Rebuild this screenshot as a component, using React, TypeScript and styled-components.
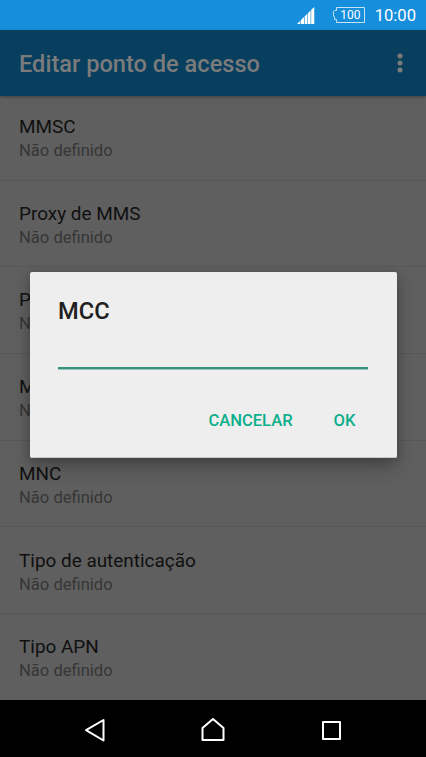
import React from "react";
import styled, { createGlobalStyle } from "styled-components";

const GlobalStyle = createGlobalStyle`
  *, *::before, *::after { box-sizing: border-box; }
  body { margin: 0; background: #000; font-family: Roboto, sans-serif; }
`;

const Screen = styled.div`
  position: relative;
  display: flex;
  flex-direction: column;
  width: 426px;
  height: 757px;
  overflow: hidden;
`;

const StatusBar = styled.header`
  display: flex;
  align-items: center;
  justify-content: flex-end;
  height: 29.5px;
  flex: none;
  padding-right: 10px;
  background: #168edc;
  color: #fff;
`;

const SignalIcon = styled.svg`
  width: 18px;
  height: 18px;
  margin-right: 17px;
  margin-top: 2px;
`;

const BatteryIcon = styled.svg`
  display: block;
  width: 34px;
  height: 18px;
`;

const Battery = styled.div`
  display: grid;
  margin-right: 9px;
  > * { grid-area: 1 / 1; }
`;

const BatteryLevel = styled.span`
  padding-left: 3.5px;
  align-self: center;
  justify-self: center;
  font-size: 12px;
  line-height: 18px;
`;

const Clock = styled.time`
  font-size: 16.6px;
  line-height: 20px;
  margin-top: 2px;
`;

const AppBar = styled.div`
  position: relative;
  z-index: 1;
  display: flex;
  align-items: center;
  justify-content: space-between;
  flex: none;
  height: 66.5px;
  padding: 0 20px 0 19px;
  background: #083f5e;
  box-shadow: 0 1px 3px rgba(0, 0, 0, 0.35);
`;

const Title = styled.h1`
  margin: 2px 0 0;
  color: #7b7b7b;
  font-size: 23.6px;
  line-height: 28px;
  font-weight: 500;
`;

const MoreIcon = styled.svg`
  width: 12px;
  height: 22px;
`;

const List = styled.ul`
  flex: none;
  height: 604px;
  margin: 0;
  padding: 0;
  overflow: hidden;
  list-style: none;
  background: #5f5f5f;
`;

const Row = styled.li<{ $first?: boolean }>`
  height: ${(p) => (p.$first ? 84.5 : 86.7)}px;
  padding: ${(p) => (p.$first ? 18.7 : 21.3)}px 19px 0;
  border-bottom: 1px solid #585858;
`;

const RowTitle = styled.div`
  color: #101010;
  font-size: 18.93px;
  line-height: 24px;
`;

const RowSummary = styled.div`
  color: #363636;
  font-size: 16.57px;
  line-height: 24.2px;
`;

const NavBar = styled.nav`
  display: flex;
  justify-content: space-between;
  align-items: center;
  flex: 1;
  padding: 3px 82.5px 0;
  background: #000;
`;

const NavIcon = styled.svg`
  width: 24px;
  height: 24px;
  fill: none;
  stroke: #fff;
  stroke-width: 2;
  stroke-linejoin: round;
`;

const Dialog = styled.section`
  position: absolute;
  z-index: 2;
  left: 29.5px;
  top: 272px;
  width: 367px;
  height: 186px;
  padding: 24.6px 28.5px 0;
  border-radius: 2px;
  background: #eee;
  box-shadow: 0 10px 18px rgba(0, 0, 0, 0.22), 0 2px 10px rgba(0, 0, 0, 0.18),
    inset 0 -1px 0 #c8c8c8;
`;

const DialogTitle = styled.h2`
  margin: 0;
  color: #202020;
  font-size: 23.67px;
  line-height: 28px;
  font-weight: 500;
`;

const Field = styled.input`
  display: block;
  width: 100%;
  height: 44.4px;
  padding: 0;
  border: 0;
  border-bottom: 2px solid #35917c;
  border-radius: 0;
  background: transparent;
  box-shadow: 0 1px 0 #9cc6bc;
  outline: none;
  font: 21px Roboto, sans-serif;
`;

const Actions = styled.div`
  display: flex;
  justify-content: flex-end;
  gap: 41px;
  padding: 42px 12.5px 0 0;
`;

const Action = styled.button`
  padding: 0;
  border: 0;
  background: none;
  color: #0caf8b;
  font: 500 16.57px/20px Roboto, sans-serif;
`;

const settings = [
  "MMSC",
  "Proxy de MMS",
  "Porta MMS",
  "MCC",
  "MNC",
  "Tipo de autenticação",
  "Tipo APN",
];

export default function App() {
  return (
    <Screen>
      <GlobalStyle />
      <StatusBar>
        <SignalIcon viewBox="0 0 18 18" fill="#fff">
          <path d="M0 17 3 14V17ZM3.7 17V13.2L7 10V17ZM7.6 17V9.4L10.2 6.8V17ZM10.8 17V6.2L13.6 3.4V17ZM14.2 17V2.8L17.3 0V17Z" />
        </SignalIcon>
        <Battery>
          <BatteryIcon viewBox="0 0 34 18" fill="none" stroke="#c5e3f7">
            <path d="M4.5 1.5H32.5V16.5H4.5V13.5H2.5V11L1.5 10V5.5L2.5 4.5H4.5Z" />
          </BatteryIcon>
          <BatteryLevel>100</BatteryLevel>
        </Battery>
        <Clock>10:00</Clock>
      </StatusBar>
      <AppBar>
        <Title>Editar ponto de acesso</Title>
        <MoreIcon viewBox="0 0 12 22" fill="#7b7b7b">
          <circle cx="6" cy="4" r="2.5" />
          <circle cx="6" cy="11" r="2.5" />
          <circle cx="6" cy="18" r="2.5" />
        </MoreIcon>
      </AppBar>
      <List>
        {settings.map((name, i) => (
          <Row key={name} $first={i === 0}>
            <RowTitle>{name}</RowTitle>
            <RowSummary>Não definido</RowSummary>
          </Row>
        ))}
      </List>
      <NavBar>
        <NavIcon viewBox="0 0 24 24">
          <path d="M20.5 2V22.5L3 12.2Z" />
        </NavIcon>
        <NavIcon viewBox="0 0 24 24">
          <path d="M1.5 22V10L12 1L22.5 10V22Z" />
        </NavIcon>
        <NavIcon viewBox="0 0 24 24">
          <path d="M3 4H20V21H3Z" />
        </NavIcon>
      </NavBar>
      <Dialog role="dialog" aria-labelledby="dialog-title">
        <DialogTitle id="dialog-title">MCC</DialogTitle>
        <Field type="text" aria-labelledby="dialog-title" />
        <Actions>
          <Action>CANCELAR</Action>
          <Action>OK</Action>
        </Actions>
      </Dialog>
    </Screen>
  );
}
